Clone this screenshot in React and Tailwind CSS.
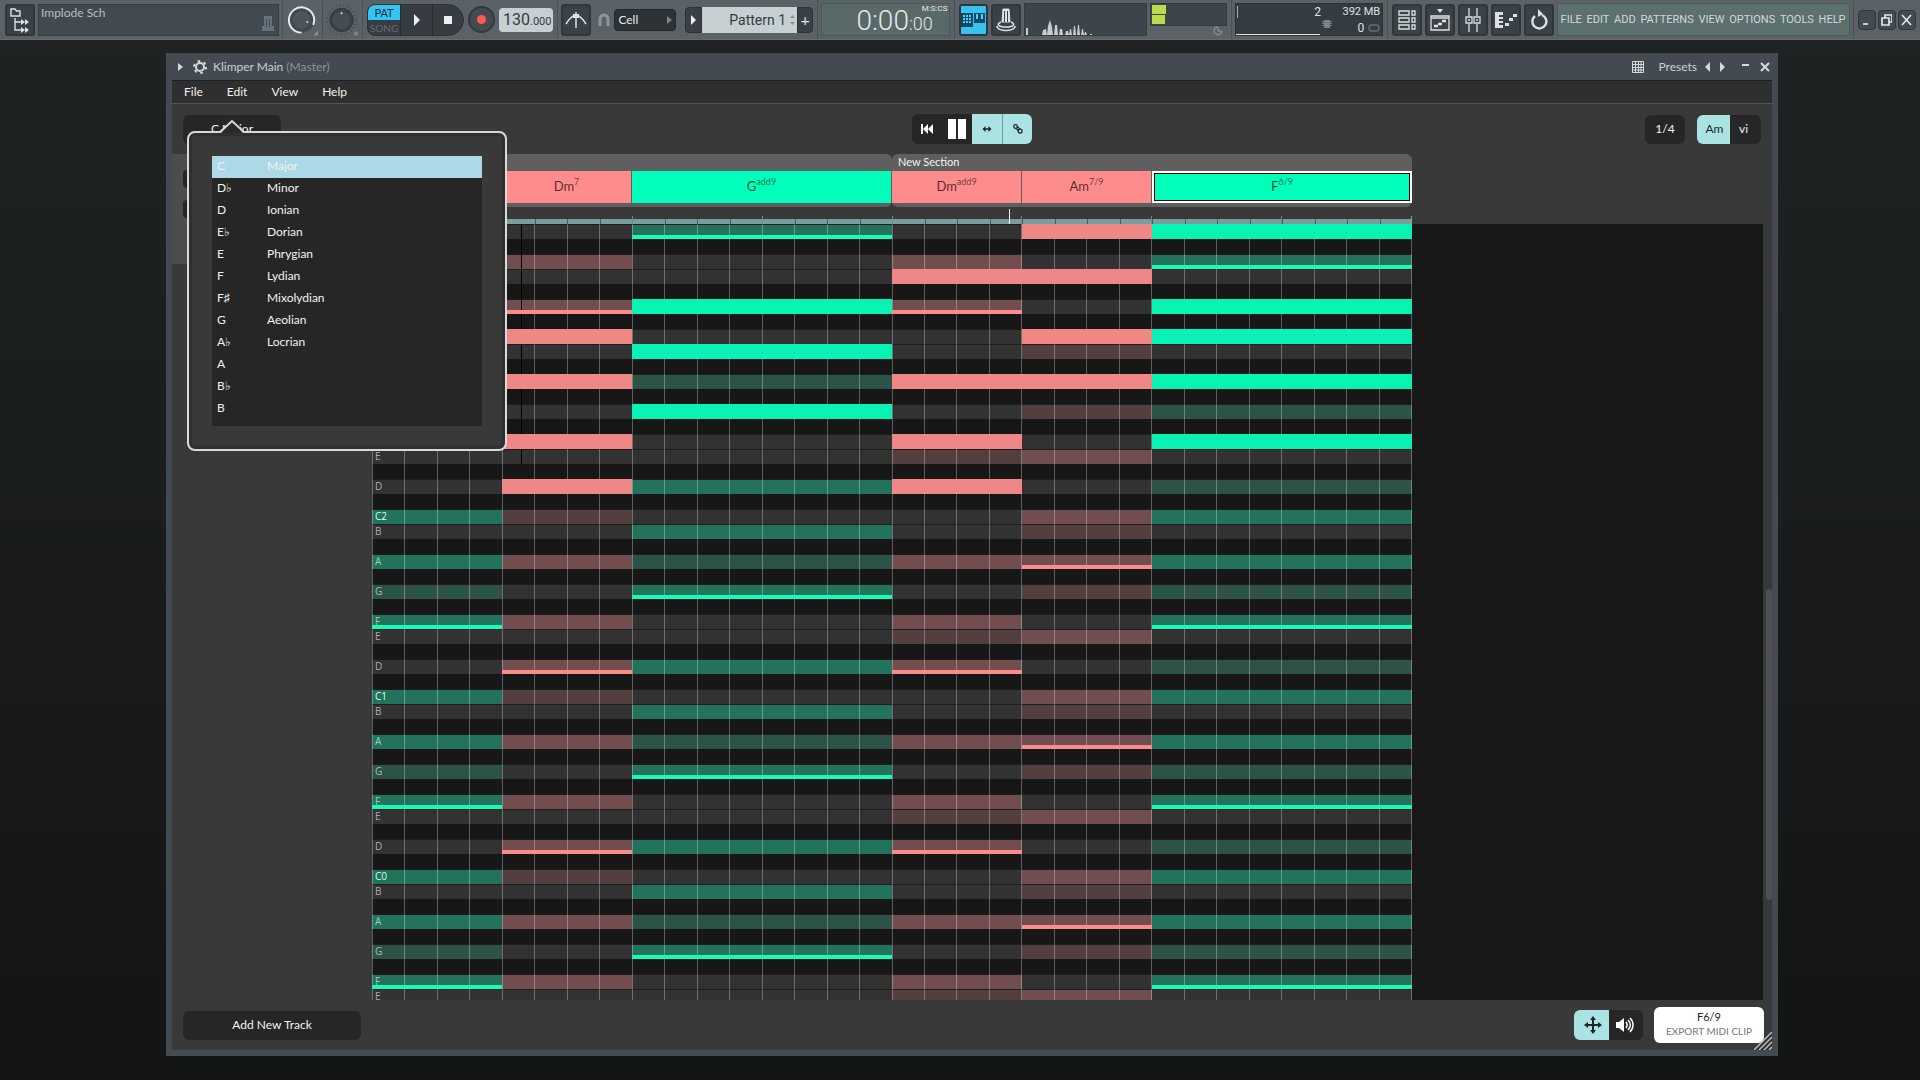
import React, { useState } from "react";

const KEYS = ["C", "D♭", "D", "E♭", "E", "F", "F♯", "G", "A♭", "A", "B♭", "B"];
const SCALES = ["Major", "Minor", "Ionian", "Dorian", "Phrygian", "Lydian", "Mixolydian", "Aeolian", "Locrian"];

// rows of the roll, top to bottom; "" is a black key
const OCTAVE = ["G", "", "F", "E", "", "D", "", "C", "B", "", "A", ""];
const ROWS = Array.from({ length: 52 }, (_, i) => {
    const note = OCTAVE[i % 12];
    return note === "C" ? "C" + (3 - Math.floor(i / 12)) : note;
});

// base: how each pitch class is shaded, played: rows holding a real note
const CHORDS = [
    { name: "F", sup: "", tone: "green", beats: 4, base: { C: "mid", A: "mid", G: "dim", F: "root" }, played: [] },
    { name: "Dm", sup: "7", tone: "red", beats: 4, base: { D: "root", C: "dim", A: "mid", F: "mid" }, played: [7, 10, 14, 17] },
    { name: "G", sup: "add9", tone: "green", beats: 8, base: { G: "root", B: "mid", A: "dim", D: "mid" }, played: [5, 8, 12] },
    { name: "Dm", sup: "add9", tone: "red", beats: 4, base: { D: "root", F: "mid", A: "mid", E: "dim" }, played: [3, 10, 14, 17] },
    { name: "Am", sup: "7/9", tone: "red", beats: 4, base: { A: "root", C: "mid", E: "mid", B: "dim", G: "dim" }, played: [0, 3, 7, 10] },
    { name: "F", sup: "6/9", tone: "green", beats: 8, base: { F: "root", A: "mid", C: "mid", G: "dim", D: "dim" }, played: [0, 5, 7, 10, 14], selected: true },
];

const FILL = {
    green: { mid: "bg-[#23725b]", dim: "bg-[#2d5348]", note: "bg-[#07f2b3]", root: "bg-[#14fcb8]" },
    red: { mid: "bg-[#724d4f]", dim: "bg-[#533f40]", note: "bg-[#f08787]", root: "bg-[#fb8c8b]" },
};

const Divider = () => <div className="w-px h-10 bg-[#4a5156]" />;

const ToolButton = ({ label, children, className = "w-[30px] bg-[#3a4147]" }) => (
    <button
        type="button"
        aria-label={label}
        className={"h-8 flex items-center justify-center rounded-[3px] border-2 border-[#30363b] text-[#dde1e3] " + className}
    >
        {children}
    </button>
);

const Hardware = () => (
    <header className="h-10 shrink-0 flex items-center justify-between overflow-hidden bg-[#5a6167] border-b border-[#666c70] pl-[5px] pr-1 text-[#dfe3e4]">
        <div className="flex items-center gap-[3px]">
            <ToolButton label="Browser">
                <svg className="shrink-0" width="22" height="26" viewBox="0 0 22 26" fill="none" stroke="currentColor" strokeWidth="1.4">
                    <path d="M2 2h4l1.500 2H11v5H2z" />
                    <path d="M6 11v12h6M6 15h6" />
                    <path d="M12 12l4 3-4 3zM16 12l4 3-4 3zM12 20l4 3-4 3zM16 20l4 3-4 3z" fill="currentColor" stroke="none" />
                </svg>
            </ToolButton>
            <div className="relative w-[241px] h-8 px-[2px] bg-[#414a51] border border-[#363d42] text-xs leading-4 text-[#b8bdbf]">
                Implode Sch
                <svg className="absolute right-1 bottom-[3px]" width="12" height="16" viewBox="0 0 12 16" fill="#68727a">
                    <path d="M2 0h8v10h2v5H0v-5h2zM4 3v8h1V3zM7 3v8h1V3z" />
                </svg>
            </div>
            <Divider />
            <div className="w-[33px] flex justify-center">
                <svg width="33" height="34" viewBox="0 0 34 34" fill="none">
                    <circle cx="16" cy="17" r="11" stroke="#42494e" strokeWidth="4" fill="#4d555b" />
                    <path d="M16 30a13 13 0 1 1 12-8" stroke="#e8ebec" strokeWidth="2" />
                    <circle cx="22" cy="19" r="1" fill="#cfd4d6" />
                    <path d="M33 28v5h-5z" fill="#8a9196" />
                </svg>
            </div>
            <Divider />
            <div className="w-[33px] flex justify-center">
                <svg width="33" height="34" viewBox="0 0 34 34" fill="none">
                    <circle cx="16" cy="17" r="15" stroke="#444b50" strokeWidth="2" strokeDasharray="1 3" />
                    <circle cx="16" cy="17" r="12" fill="#3b4247" stroke="#31373b" />
                    <circle cx="16" cy="17" r="9" fill="#454d53" />
                    <circle cx="16" cy="10" r="1" fill="#e8ebec" />
                    <path d="M29 29h4v4h-4z" fill="#7d8489" />
                </svg>
            </div>
            <Divider />
            <div className="flex h-8 w-[97px] ml-px rounded-l-lg rounded-r-2xl overflow-hidden border border-[#2d3236] bg-[#363c41]">
                <div className="w-8 flex flex-col text-[11px] text-center">
                    <button type="button" className="h-[15px] bg-[#35c5f2] text-[#0f2d3a] leading-[15px]">PAT</button>
                    <button type="button" className="h-4 leading-4 text-[10px] text-[#656c71]">SONG</button>
                </div>
                <button type="button" aria-label="Play" className="w-8 flex items-center justify-center border-l border-[#272b2f]">
                    <svg width="8" height="12" viewBox="0 0 8 12" fill="#eef0f0"><path d="M1 0l6 6-6 6z" /></svg>
                </button>
                <button type="button" aria-label="Stop" className="flex-1 flex items-center justify-center border-l border-[#272b2f]">
                    <svg width="8" height="8" viewBox="0 0 8 8" fill="#eef0f0"><path d="M0 0h8v8H0z" /></svg>
                </button>
            </div>
            <button type="button" aria-label="Record" className="size-[27px] mx-px rounded-full border-2 border-[#33393d] bg-[#444b50] flex items-center justify-center">
                <span className="size-[9px] rounded-full bg-[#ff5a4f]" />
            </button>
            <div className="w-[54px] h-6 pl-1 pr-[3px] flex items-center justify-between rounded-sm bg-[#c6d0d3] text-[#343c40] font-['Roboto',sans-serif]">
                <span><span className="text-base">130</span><span className="text-[11px]">.000</span></span>
            </div>
        </div>
        <Divider />
        <div className="flex items-center">
            <ToolButton label="Metronome">
                <svg className="shrink-0" width="22" height="16" viewBox="0 0 22 16" fill="none" stroke="currentColor" strokeWidth="1.5">
                    <path d="M11 0v16M1 12C4 7 7 4 11 3M21 12C18 7 15 4 11 3" />
                    <path d="M8 2h6v4H8z" fill="currentColor" stroke="none" />
                </svg>
            </ToolButton>
            <svg className="ml-[7px] mr-1" width="12" height="14" viewBox="0 0 12 14" fill="none" stroke="#8e9599" strokeWidth="3">
                <path d="M2 13V6a4 4 0 0 1 8 0v7" />
            </svg>
            <button type="button" className="w-[62px] h-[22px] px-[3px] flex items-center justify-between rounded-sm border border-[#23282b] bg-[#2d3236] text-xs text-[#e6e9ea]">
                Cell
                <svg width="5" height="8" viewBox="0 0 5 8" fill="#7d8488"><path d="M0 0l5 4-5 4z" /></svg>
            </button>
        </div>
        <div className="ml-[5px] flex items-center">
            <button type="button" aria-label="Previous pattern" className="w-[17px] h-[26px] rounded-l-sm border border-[#2d3236] bg-[#3a4046] flex items-center justify-center">
                <svg width="5" height="10" viewBox="0 0 5 10" fill="#eef0f0"><path d="M0 0l5 5-5 5z" /></svg>
            </button>
            <div className="w-[95px] h-[26px] pr-[2px] flex items-center justify-end gap-1 bg-[#c6d0d3] text-[#343c40] text-sm font-['Roboto',sans-serif]">
                Pattern 1
                <svg width="5" height="12" viewBox="0 0 5 12" fill="#8d979b"><path d="M0 4l2.500-3L5 4zM0 8h5L2.500 11z" /></svg>
            </div>
            <button type="button" aria-label="Add pattern" className="w-4 h-[26px] rounded-r-sm border border-[#2d3236] bg-[#3a4046] text-base leading-5">+</button>
        </div>
        <Divider />
        <div className="relative w-[129px] h-[33px] pl-[34px] flex items-end bg-[#586968] border border-[#4a5858] text-[#e2e8e8] font-['Roboto',sans-serif]">
            <span className="text-[28px] leading-7 font-light">0:00</span>
            <span className="text-lg leading-[22px] font-light">:00</span>
            <span className="absolute right-[2px] top-0 text-[8px] leading-[9px]">M:S:CS</span>
        </div>
        <Divider />
        <div className="flex items-center gap-[3px]">
            <ToolButton label="Typing keyboard" className="w-[29px] bg-[#37c2f2]">
                <svg className="shrink-0" width="24" height="14" viewBox="0 0 24 14" fill="#0d4a66">
                    <path d="M0 0h12v14H0zM13 0h11v10H13z" />
                    <path d="M2 2h2v2H2zM5 2h2v2H5zM8 2h2v2H8zM2 5h2v2H2zM5 5h2v2H5zM8 5h2v2H8zM2 8h2v2H2zM5 8h2v2H5zM8 8h2v2H8zM15 1h2v5h-2zM20 1h2v5h-2z" fill="#58cdf5" />
                </svg>
            </ToolButton>
            <ToolButton label="Touch controller">
                <svg className="shrink-0" width="20" height="24" viewBox="0 0 20 24" fill="none" stroke="currentColor">
                    <path d="M7 1h6l1 13H6z" fill="currentColor" />
                    <path d="M8.500 3v11M11.500 3v11" stroke="#3a4046" />
                    <path d="M5 14c-5 2-3 5 5 5s10-3 5-5M1 18c0 6 18 6 18 0" strokeWidth="1.600" />
                </svg>
            </ToolButton>
            <div className="w-[123px] h-[33px] flex items-end bg-[#3c454b] border border-[#343b40]">
                <svg width="80" height="16" viewBox="0 0 80 16" fill="#c8cdcf">
                    <path d="M1 16V9h2v7zM17 16l1-5 3-1 1 6zM22 16l1-9 2-6 2 7 1 8zM29 16l1-10h2l1 10zM34 16l1-6h2l1 6zM40 16l1-4h2l1 4zM44 16l1-6h1l1 6zM48 16l1-9h1l1 9zM52 16l1-10h1l1 10zM56 16l1-6h1l1 6zM59 16l1-3h1l1 3zM65 15h2v1h-2z" />
                </svg>
            </div>
            <div className="flex flex-col items-end h-[33px] w-[77px]">
                <div className="w-full h-6 p-px flex flex-col gap-px bg-[#3c454b] border border-[#343b40]">
                    <span className="w-[14px] flex-1 bg-[#b9dc4c]" />
                    <span className="w-[13px] flex-1 bg-[#b9dc4c]" />
                </div>
                <svg className="mr-1" width="10" height="10" viewBox="0 0 10 10" fill="none" stroke="#868d91" strokeWidth="1.500"><path d="M5 2v3h3M5 1a4 4 0 1 0 4 4" /></svg>
            </div>
        </div>
        <Divider />
        <div className="relative w-[148px] h-[33px] flex flex-col justify-between px-[2px] bg-[#343c41] border border-[#2c3236] text-xs leading-4 font-['Roboto',sans-serif]">
            <div className="flex justify-between pl-[76px]"><span>2</span><span className="text-[11px]">392 MB</span></div>
            <div className="flex justify-end items-center gap-1">0<span className="w-3 h-2 rounded-full border-2 border-[#596268]" /></div>
            <div className="absolute left-0 bottom-0 w-[84px] h-px bg-[#dfe3e4]" />
            <div className="absolute left-px top-[2px] w-px h-3 bg-[#a5abae]" />
            <svg className="absolute left-[86px] top-4" width="10" height="8" viewBox="0 0 10 8" fill="#78828a"><path d="M2 0h6v8H2zM0 1h10v1H0zM0 3h10v1H0zM0 5h10v1H0z" /></svg>
        </div>
        <Divider />
        <div className="flex items-center gap-[3px]">
            <ToolButton label="Playlist">
                <svg width="18" height="20" viewBox="0 0 18 20" fill="none" stroke="currentColor" strokeWidth="1.300">
                    <path d="M1 1h10v4H1zM1 8h10v4H1zM1 15h10v4H1zM14 1h3v4h-3zM14 8h3v4h-3zM14 15h3v4h-3z" />
                </svg>
            </ToolButton>
            <ToolButton label="Piano roll">
                <svg width="20" height="22" viewBox="0 0 20 22" fill="none" stroke="currentColor" strokeWidth="1.300">
                    <path d="M7 0h6l-3 4z" fill="currentColor" stroke="none" />
                    <path d="M1 7h18v14H1zM1 9h18" />
                    <path d="M4 17h4M8 15h4M12 12h4" strokeWidth="2.500" />
                </svg>
            </ToolButton>
            <ToolButton label="Mixer">
                <svg width="16" height="24" viewBox="0 0 16 24" fill="none" stroke="currentColor" strokeWidth="1.300">
                    <path d="M4 0v8M4 16v8M12 0v8M12 16v8M1 9h6v6H1zM9 9h6v6H9zM3 12h2M11 12h2" />
                </svg>
            </ToolButton>
            <ToolButton label="Channel rack">
                <svg width="22" height="20" viewBox="0 0 22 20" fill="currentColor">
                    <path d="M0 2h8v3H4v2h4v2H4v2h4v2H4v2h4v3H0zM10 13h4v3h-4zM14 8h4v3h-4zM18 4h4v3h-4z" />
                </svg>
            </ToolButton>
            <ToolButton label="Undo">
                <svg width="18" height="22" viewBox="0 0 18 22" fill="none" stroke="currentColor" strokeWidth="2.400">
                    <path d="M12 6a7 7 0 1 1-7 1" />
                    <path d="M8 0v8l5-3z" fill="currentColor" stroke="none" />
                </svg>
            </ToolButton>
            <nav className="w-[293px] h-[33px] px-[3px] pt-[2px] flex items-center justify-between bg-[#5c706f] border border-[#4b5c5c] text-[11px] text-[#cfd9d9] font-['Roboto',sans-serif]">
                {["FILE", "EDIT", "ADD", "PATTERNS", "VIEW", "OPTIONS", "TOOLS", "HELP"].map((m) => (
                    <a key={m} href="#">{m}</a>
                ))}
            </nav>
        </div>
        <Divider />
        <div className="flex items-center gap-[2px]">
            {[["Minimize", "M2 10h5"], ["Restore", "M1 4h7v7H1zM4 4V1h7v7H8"], ["Close", "M1 1l9 10M10 1L1 11"]].map(([label, d]) => (
                <button key={label} type="button" aria-label={label} className="w-[18px] h-5 flex items-center justify-center rounded-sm border border-[#31373b] bg-[#444b50]">
                    <svg width="11" height="12" viewBox="0 0 11 12" fill="none" stroke="#e3e6e7" strokeWidth="1.700"><path d={d} /></svg>
                </button>
            ))}
        </div>
    </header>
);

const TitleBar = () => (
    <div className="h-[27px] shrink-0 pl-[6px] pr-[2px] flex items-center text-xs text-[#ccd1d4]">
        <svg width="5" height="8" viewBox="0 0 5 8" fill="#d5d9db"><path d="M0 0l5 4-5 4z" /></svg>
        <svg className="ml-[10px]" width="14" height="14" viewBox="0 0 14 14" fill="none" stroke="#d5d9db">
            <circle cx="7" cy="7" r="4" strokeWidth="2" />
            <circle cx="7" cy="7" r="6" strokeWidth="2" strokeDasharray="2.600 3.680" />
        </svg>
        <h1 className="ml-[6px]">Klimper Main <span className="text-[#8d9499]">(Master)</span></h1>
        <svg className="ml-auto" width="12" height="12" viewBox="0 0 12 12" fill="none" stroke="#d5d9db">
            <path d="M.5.5h11v11H.5zM.5 3.500h11M.5 6.500h11M.5 9h11M3.500 1v10M6.500 1v10M9 1v10" />
        </svg>
        <button type="button" className="ml-[14px]">Presets</button>
        <button type="button" aria-label="Previous preset" className="ml-2">
            <svg width="5" height="10" viewBox="0 0 5 10" fill="#d5d9db"><path d="M5 0L0 5l5 5z" /></svg>
        </button>
        <button type="button" aria-label="Next preset" className="ml-[10px]">
            <svg width="5" height="10" viewBox="0 0 5 10" fill="#d5d9db"><path d="M0 0l5 5-5 5z" /></svg>
        </button>
        <button type="button" aria-label="Minimize window" className="ml-[17px]">
            <svg width="7" height="10" viewBox="0 0 7 10" fill="#d5d9db"><path d="M0 2h7v2H0z" /></svg>
        </button>
        <button type="button" aria-label="Close window" className="ml-[11px]">
            <svg width="10" height="10" viewBox="0 0 10 10" fill="none" stroke="#d5d9db" strokeWidth="2"><path d="M1 1l8 8M9 1L1 9" /></svg>
        </button>
    </div>
);

const ScalePicker = ({ musicKey, scale, onKey, onScale }) => (
    <div className="absolute z-30 left-1 top-4 w-80 h-80 p-[23px] rounded-lg border-2 border-[#d9d9d9] bg-[#393939] shadow-[inset_0_0_0_3px_#303030]">
        <svg className="absolute left-[30px] -top-[14px]" width="26" height="14" viewBox="0 0 26 14">
            <path d="M2 14L13 2l11 12z" fill="#2a2a2a" />
            <path d="M1 13L13 2l12 11" fill="none" stroke="#d9d9d9" strokeWidth="2" />
        </svg>
        <div className="h-full grid grid-cols-[50px_1fr] content-start bg-[#262626] text-xs text-[#f2f2f2]">
            <ul>
                {KEYS.map((k) => (
                    <li key={k}>
                        <button type="button" onClick={() => onKey(k)} className={"block w-full h-[22px] pb-px pl-[5px] text-left " + (k === musicKey ? "bg-[#add8e6]" : "")}>{k}</button>
                    </li>
                ))}
            </ul>
            <ul>
                {SCALES.map((s) => (
                    <li key={s}>
                        <button type="button" onClick={() => onScale(s)} className={"block w-full h-[22px] pb-px pl-[5px] text-left " + (s === scale ? "bg-[#add8e6]" : "")}>{s}</button>
                    </li>
                ))}
            </ul>
        </div>
    </div>
);

const Section = ({ title, chords }) => (
    <div className="w-[520px] h-[53px] pb-1 rounded-md bg-[#5f5f5f] flex flex-col">
        <div className="h-[17px] pl-[6px] text-[11px] leading-4 text-[#f2f2f2]">{title}</div>
        <div className="flex-1 flex">
            {chords.map((c, i) => (
                <button
                    key={i}
                    type="button"
                    className={
                        "flex items-center justify-center text-[13px] text-black/70 " +
                        (c.beats === 8 ? "w-[260px] " : "w-[130px] ") +
                        (c.tone === "green" ? "bg-[#00ffbb] " : "bg-[#ff8c8c] ") +
                        (c.selected ? "border-2 border-white outline-1 -outline-offset-3 outline-black" : "border-r border-[#5f5f5f]")
                    }
                >
                    <span>{c.name}<sup className="text-[9px] -top-[6px] text-black/60">{c.sup}</sup></span>
                </button>
            ))}
        </div>
    </div>
);

const Cell = ({ chord, note, row }) => {
    const fill = FILL[chord.tone];
    if (chord.played.includes(row)) return <div className={"relative z-10 h-[15px] " + fill.note} />;
    if (!note) return <div className="h-[15px] bg-[#171717]" />;
    const shade = chord.base[note[0]];
    const bg = shade === "root" ? fill.mid : shade ? fill[shade] : "bg-[#323232]";
    return (
        <div className={"h-[15px] border-t border-[#1d1d1d] flex flex-col justify-end " + bg}>
            {shade === "root" && <div className={"relative z-10 h-1 " + fill.root} />}
        </div>
    );
};

const PianoRoll = () => (
    <div className="flex-1 min-h-0 overflow-hidden bg-[#181818]">
        <div className="relative w-[1040px] h-full overflow-hidden flex">
            {CHORDS.map((c, i) => (
                <div key={i} className={c.beats === 8 ? "w-[260px]" : "w-[130px]"}>
                    {ROWS.map((note, row) => <Cell key={row} chord={c} note={note} row={row} />)}
                </div>
            ))}
            <div className="absolute inset-0 flex border-r border-white/30">
                {Array.from({ length: 32 }, (_, i) => <div key={i} className="flex-1 border-l border-white/30" />)}
            </div>
            <div className="absolute left-[149px] top-0 w-px h-60 bg-black" />
            <div className="absolute left-[3px] top-0 text-[10px] font-['Open_Sans',sans-serif]">
                {ROWS.map((note, i) => (
                    <div key={i} className="h-[15px]">
                        <div className={"leading-[14px] " + (note.length > 1 ? "text-[#d5fff0]" : "text-white/60")}>{note}</div>
                    </div>
                ))}
            </div>
        </div>
    </div>
);

const Ruler = () => (
    <div className="relative w-[1040px] h-[17px] pt-3">
        <div className="h-[5px] flex bg-[#7a9e9f]">
            {Array.from({ length: 32 }, (_, i) => <div key={i} className="flex-1 border-l border-[#4b5c5c]" />)}
        </div>
        <div className="absolute left-0 bottom-0 w-full h-2 flex border-r border-[#9a9a9a]">
            {Array.from({ length: 8 }, (_, i) => <div key={i} className="flex-1 border-l border-[#7d8585]" />)}
        </div>
        <div className="absolute left-[637px] top-[2px] w-px h-[15px] bg-white" />
    </div>
);

const App = () => {
    const [musicKey, setMusicKey] = useState("C");
    const [scale, setScale] = useState("Major");

    return (
        <div className="h-screen flex flex-col overflow-hidden bg-[#151919] bg-linear-to-b from-[#202324] to-[#131515] font-['Lato','Noto_Sans',sans-serif]">
            <Hardware />
            <div className="flex-1 min-h-0 flex pt-[13px] pb-6 pl-[166px] pr-[142px]">
                <main className="flex-1 flex flex-col bg-[#434b51] px-[6px] pb-[6px]">
                    <TitleBar />
                    <div className="relative flex-1 min-h-0 flex flex-col bg-[#393939] border-t border-[#1b2226] text-xs text-[#f2f2f2]">
                        <nav className="h-[23px] shrink-0 pl-3 flex items-center gap-6 bg-[#2f2f2f] border-b border-[#555]">
                            {["File", "Edit", "View", "Help"].map((m) => <a key={m} href="#">{m}</a>)}
                        </nav>

                        <div className="h-[50px] shrink-0 grid grid-cols-3 items-center px-[11px]">
                            <div className="relative">
                                <button type="button" className="block w-[98px] h-[29px] rounded-md bg-[#262626]">{musicKey} {scale}</button>
                                <ScalePicker musicKey={musicKey} scale={scale} onKey={setMusicKey} onScale={setScale} />
                            </div>
                            <div className="justify-self-center h-[30px] flex rounded-md overflow-hidden bg-[#262626]">
                                <button type="button" aria-label="Rewind" className="w-[30px] flex items-center justify-center">
                                    <svg width="12" height="10" viewBox="0 0 12 10" fill="#fff"><path d="M0 0h2v10H0zM7 0v10L2 5zM12 0v10L7 5z" /></svg>
                                </button>
                                <button type="button" aria-label="Pause" className="w-[30px] flex items-center justify-center">
                                    <svg width="20" height="20" viewBox="0 0 20 20" fill="#fff"><path d="M1 0h8v20H1zM11 0h8v20h-8z" /></svg>
                                </button>
                                <button type="button" aria-label="Follow" className="w-[30px] flex items-center justify-center bg-[#abe3e3]">
                                    <svg width="10" height="6" viewBox="0 0 12 8" fill="#1c2626"><path d="M0 4l4-4v3h4V0l4 4-4 4V5H4v3z" /></svg>
                                </button>
                                <button type="button" aria-label="Link" className="w-[30px] flex items-center justify-center bg-[#abe3e3] border-l border-[#7c9b9b]">
                                    <svg width="10" height="10" viewBox="0 0 12 12" fill="none" stroke="#1c2626" strokeWidth="1.500">
                                        <circle cx="3" cy="3" r="2.200" /><circle cx="8.500" cy="8.500" r="2.400" /><path d="M3 5l4 3M5 3l3.500 3" />
                                    </svg>
                                </button>
                            </div>
                            <div className="justify-self-end flex gap-3">
                                <button type="button" className="w-10 h-[29px] rounded-md bg-[#262626]">1/4</button>
                                <div className="h-[29px] flex rounded-md overflow-hidden bg-[#262626]">
                                    <button type="button" className="w-[33px] pl-[2px] bg-[#abe3e3] text-[#1c2626]">Am</button>
                                    <button type="button" className="w-[31px] pr-1">vi</button>
                                </div>
                            </div>
                        </div>

                        <div className="flex-1 min-h-0 flex">
                            <aside className="w-[200px] shrink-0">
                                <div className="h-[110px] px-[11px] py-4 flex flex-col gap-3 bg-[#4d4d4d]">
                                    <div className="h-[18px] rounded bg-[#262626]" />
                                    <div className="h-[18px] rounded bg-[#262626]" />
                                </div>
                            </aside>
                            <div className="flex-1 min-w-0 flex flex-col">
                                <div className="flex">
                                    <Section title="" chords={CHORDS.slice(0, 3)} />
                                    <Section title="New Section" chords={CHORDS.slice(3)} />
                                </div>
                                <Ruler />
                                <PianoRoll />
                            </div>
                            <div className="w-[9px] shrink-0 flex flex-col items-end pt-[435px] pb-[100px]">
                                <div className="w-[6px] flex-1 rounded bg-[#505050]" />
                            </div>
                        </div>

                        <footer className="h-[50px] shrink-0 pl-[11px] pr-2 flex items-center">
                            <button type="button" className="w-[178px] h-[29px] pb-px rounded-md bg-[#262626]">Add New Track</button>
                            <div className="ml-auto h-[30px] flex rounded-md overflow-hidden bg-[#262626]">
                                <button type="button" aria-label="Drag" className="w-[35px] pl-[3px] flex items-center justify-center bg-[#abe3e3]">
                                    <svg width="18" height="18" viewBox="0 0 18 18" fill="#1c2626">
                                        <path d="M9 0l3 4h-2v4h4V6l4 3-4 3v-2h-4v4h2l-3 4-3-4h2v-4H4v2L0 9l4-3v2h4V4H6z" />
                                    </svg>
                                </button>
                                <button type="button" aria-label="Volume" className="w-[34px] pr-[3px] flex items-center justify-center">
                                    <svg width="18" height="16" viewBox="0 0 18 16" fill="none" stroke="#fff" strokeWidth="1.500">
                                        <path d="M0 5h3l5-4v14l-5-4H0z" fill="#fff" stroke="none" />
                                        <path d="M10 5c1.500 2 1.500 4 0 6M12 3c3 3 3 7 0 10M14 1c4 4 4 10 0 14" />
                                    </svg>
                                </button>
                            </div>
                            <button type="button" className="ml-[11px] w-[110px] h-9 pb-[2px] rounded-md bg-white text-[11px] leading-[15px] text-[#222]">
                                <span className="block">F6/9</span>
                                <span className="block text-[10px] text-[#777]">EXPORT MIDI CLIP</span>
                            </button>
                        </footer>
                        <svg className="absolute right-0 bottom-0" width="18" height="18" viewBox="0 0 18 18" stroke="#c4c4c4" strokeWidth="1.400">
                            <path d="M0 18h18V0z" fill="#333" stroke="none" />
                            <path d="M0 18L18 0M5 18L18 5M10 18l8-8M15 18l3-3" />
                        </svg>
                    </div>
                </main>
            </div>
        </div>
    );
};

export default App;
